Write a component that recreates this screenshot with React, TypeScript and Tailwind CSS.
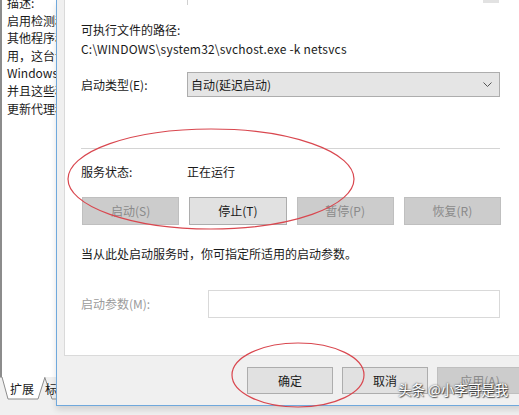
import React from 'react'

const leftLines = [
  '描述:',
  '启用检测和下载',
  '其他程序和功能',
  '用，这台计算机',
  'Windows Update',
  '并且这些程序不',
  '更新代理程序',
]

function Btn({ label, disabled, w = 'w-full' }: { label: string; disabled?: boolean; w?: string }) {
  return (
    <div
      className={`${w} h-[28px] flex items-center justify-center border text-[12px] ${
        disabled ? 'bg-[#cccccc] border-[#bfbfbf] text-[#8a8a8a]' : 'bg-[#e1e1e1] border-[#adadad] text-[#1a1a1a]'
      }`}
    >
      {label}
    </div>
  )
}

export default function App() {
  return (
    <div className="relative w-[519px] h-[415px] overflow-hidden bg-[#f0f0f0] flex font-['Noto_Sans_CJK_SC','Noto_Sans',sans-serif] text-[12px] text-[#1a1a1a]">
      {/* background window */}
      <div className="w-[56px] h-full flex flex-col shrink-0">
        <div className="h-[377px] bg-white border-l-2 border-[#8c8c8c] pl-[5px] overflow-hidden">
          <div className="-mt-[6px] leading-[17.6px] whitespace-nowrap">
            {leftLines.map((l) => (
              <div key={l}>{l}</div>
            ))}
          </div>
        </div>
        <div className="h-[24px] relative overflow-hidden">
          <svg width="56" height="24" className="absolute inset-0">
            <polyline points="0,0 2,0 8,22 38,22 45,0" fill="#ffffff" stroke="#8c8c8c" strokeWidth="1" />
            <polyline points="45,1 52,22 56,22" fill="none" stroke="#8c8c8c" strokeWidth="1" />
          </svg>
          <div className="relative flex items-center h-full text-[12px] whitespace-nowrap">
            <span className="ml-[10px] shrink-0">扩展</span>
            <span className="ml-[11px] shrink-0">标准</span>
          </div>
        </div>
      </div>

      {/* dialog */}
      <div className="flex-1 h-full flex flex-col">
        <div className="h-[406px] border-l border-b border-[#6fa8dc] bg-[#f0f0f0] flex flex-col shadow-[0_4px_6px_rgba(0,0,0,0.12)]">
          <div className="ml-[7px] h-[356px] bg-white border-l border-b border-[#dadada] pl-[16px]">
            <div className="w-[419px] relative">
              {/* remains of description box */}
              <div className="h-[21px] flex">
                <div className="ml-[106px] w-px h-[5px] bg-[#d0d0d0]" />
                <div className="ml-[295px] w-[16px] h-[3px] bg-[#e2e2e2]" />
              </div>
              <div className="leading-[17px]">可执行文件的路径:</div>
              <div className="leading-[17px] mt-[2px] tracking-[0.2px]">C:\WINDOWS\system32\svchost.exe -k netsvcs</div>
              <div className="flex items-center mt-[15px] h-[25px]">
                <div className="w-[106px]">启动类型(E):</div>
                <div className="flex-1 h-[25px] bg-[#e5e5e5] border border-[#adadad] flex items-center pl-[3px] pr-[7px]">
                  <span className="flex-1">自动(延迟启动)</span>
                  <svg width="9" height="6" viewBox="0 0 9 6">
                    <path d="M0.5 0.5 L4.5 4.5 L8.5 0.5" fill="none" stroke="#555" strokeWidth="1" />
                  </svg>
                </div>
              </div>
              <div className="h-px bg-[#d4d4d4] mt-[51px]" />
              <div className="flex items-center h-[17px] mt-[14px]">
                <div className="w-[106px]">服务状态:</div>
                <div>正在运行</div>
              </div>
              <div className="grid grid-cols-4 gap-[10px] mt-[17px] ml-[1px] -mr-[1px]">
                <Btn label="启动(S)" disabled />
                <Btn label="停止(T)" />
                <Btn label="暂停(P)" disabled />
                <Btn label="恢复(R)" disabled />
              </div>
              <div className="leading-[17px] mt-[20px]">当从此处启动服务时，你可指定所适用的启动参数。</div>
              <div className="flex items-center mt-[28px]">
                <div className="w-[127px] text-[#9b9b9b]">启动参数(M):</div>
                <div className="flex-1 h-[28px] bg-white border border-[#d9d9d9]" />
              </div>
            </div>
          </div>
          <div className="flex ml-[190px] mt-[11px] gap-[9px]">
            <div className="w-[86px] h-[27px] shrink-0 flex items-center justify-center bg-[#e1e1e1] border border-[#adadad]">确定</div>
            <div className="w-[86px] h-[27px] shrink-0 flex items-center justify-center bg-[#e1e1e1] border border-[#adadad]">取消</div>
            <div className="w-[86px] h-[27px] shrink-0 flex items-center justify-center bg-[#cccccc] border border-[#bfbfbf] text-[#8a8a8a]">应用(A)</div>
          </div>
        </div>
      </div>

      {/* red hand-drawn marks */}
      <svg className="absolute inset-0 pointer-events-none" width="519" height="415">
        <ellipse cx="211" cy="179" rx="143" ry="50" fill="none" stroke="#d9474f" strokeWidth="1.2" />
        <ellipse cx="298" cy="375" rx="66" ry="32" fill="none" stroke="#d9474f" strokeWidth="1.2" />
      </svg>

      {/* watermark */}
      <div className="absolute left-[398px] top-[380px] text-[13.5px] leading-[18px] text-white whitespace-nowrap [text-shadow:0_0_2px_rgba(0,0,0,0.8),1px_1px_1px_rgba(0,0,0,0.6)]">
        头条 @小李哥是我
      </div>
    </div>
  )
}
